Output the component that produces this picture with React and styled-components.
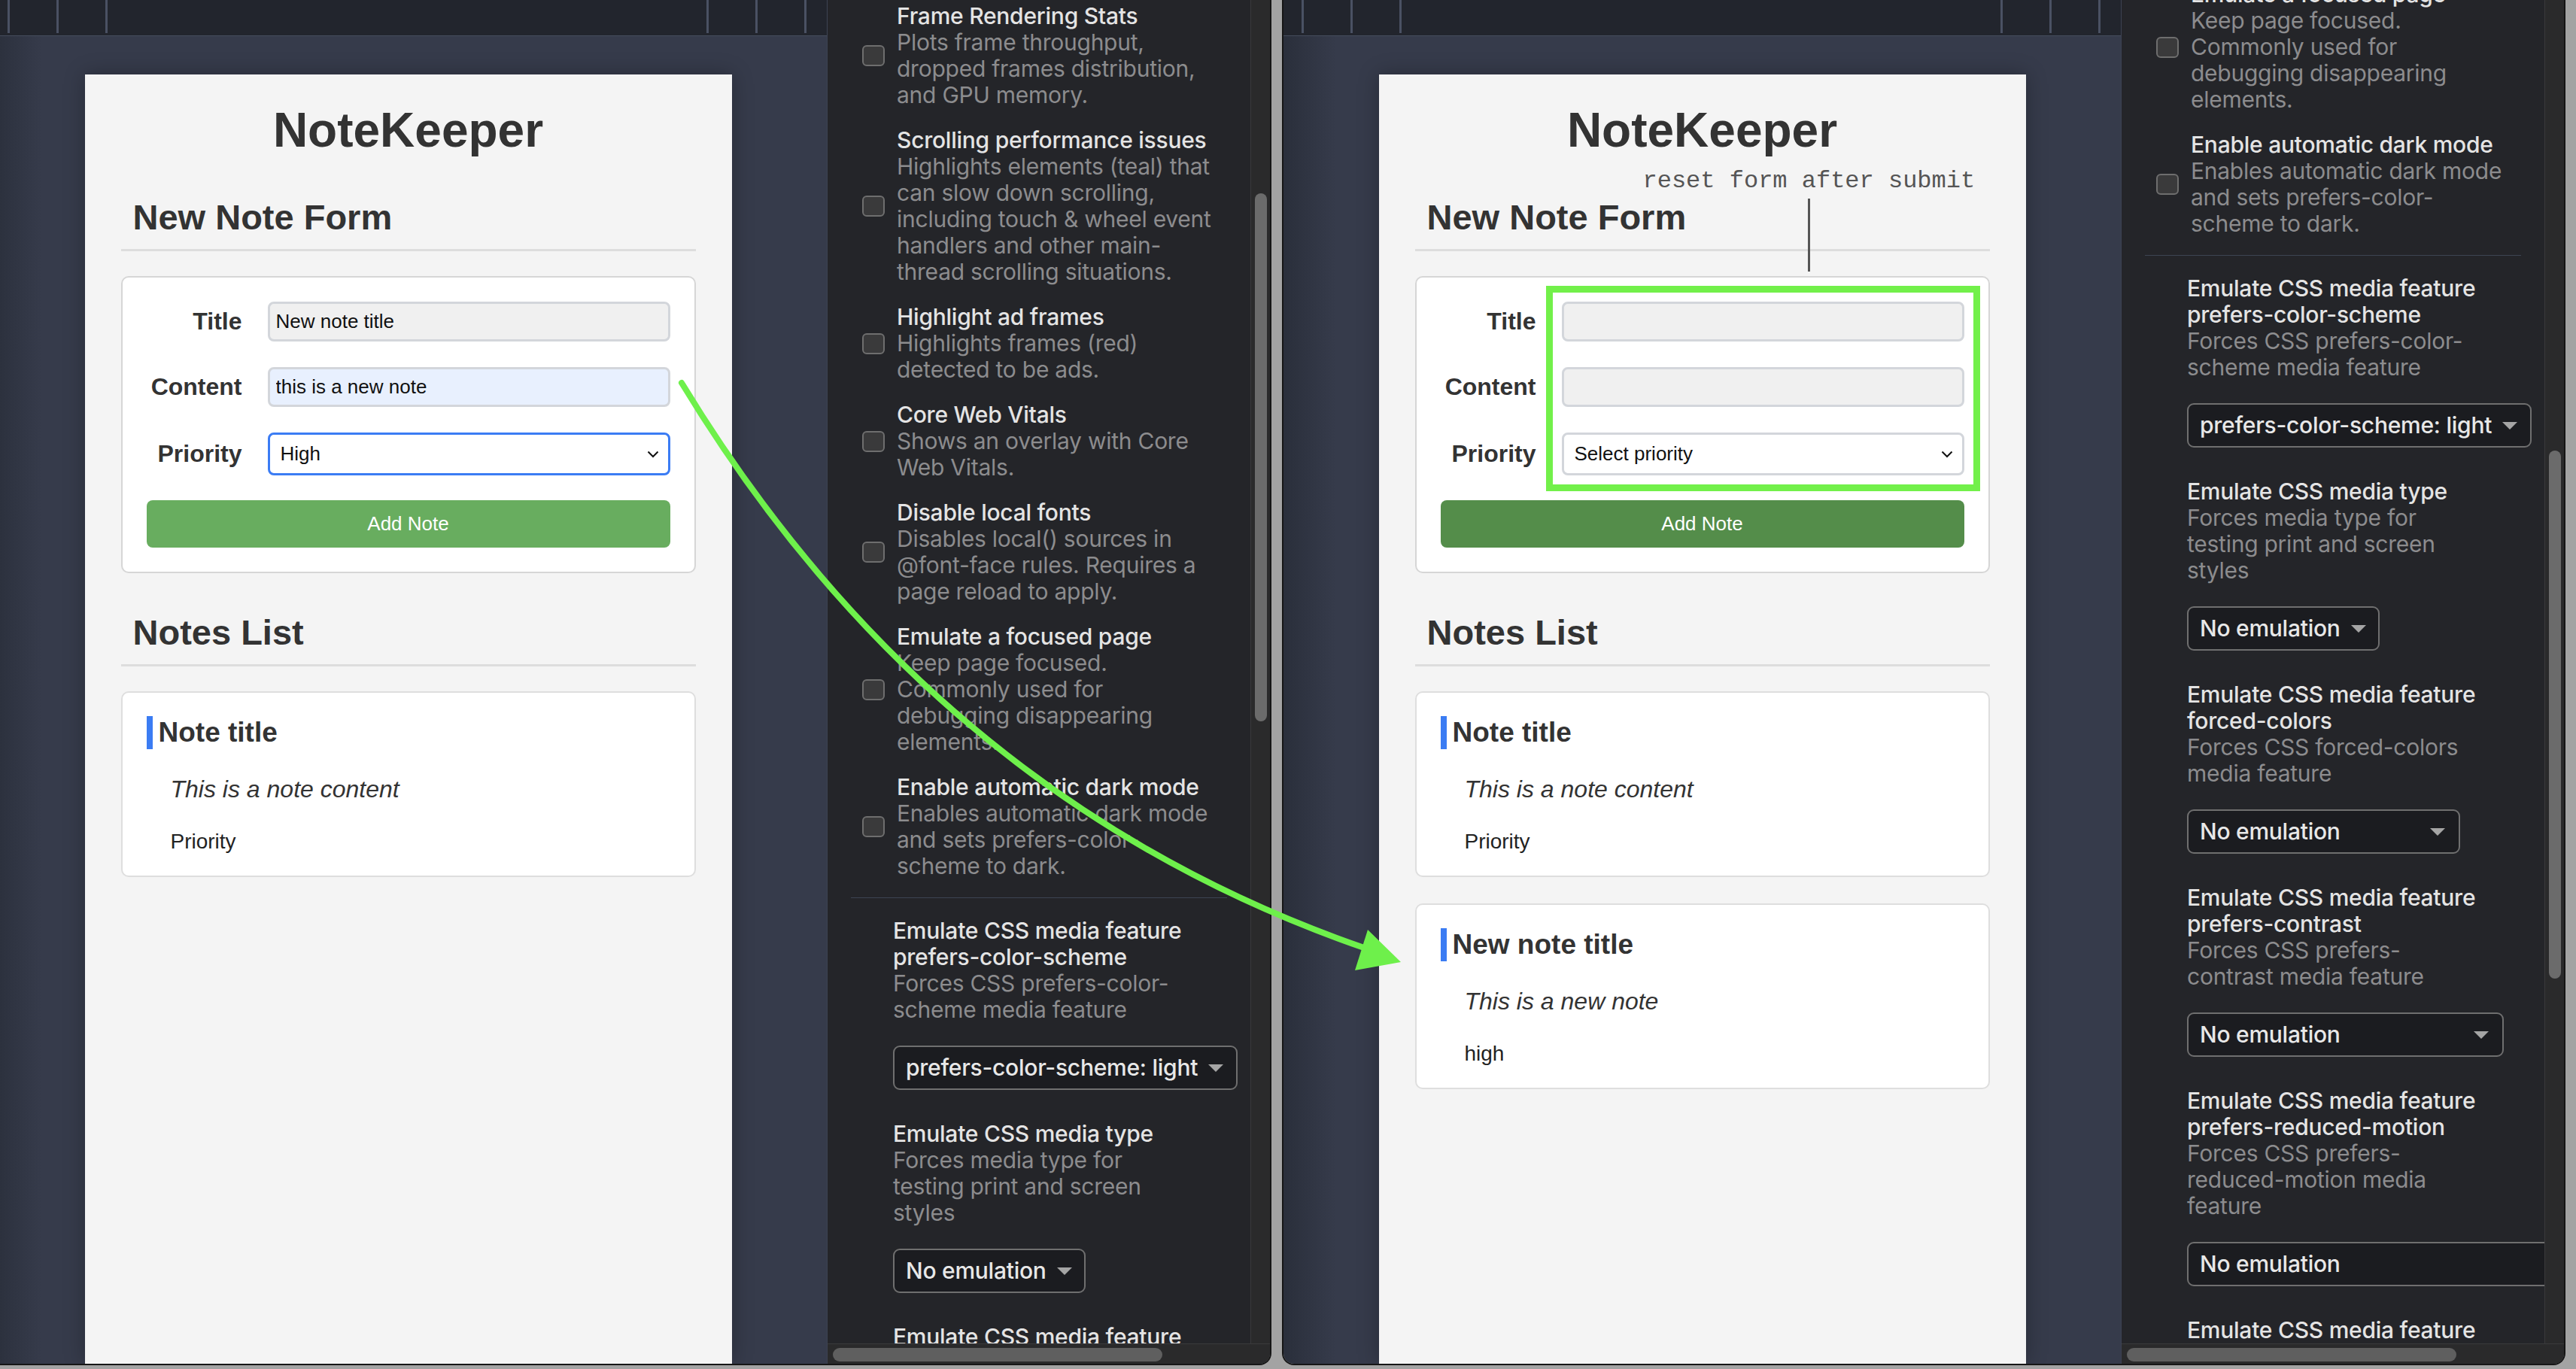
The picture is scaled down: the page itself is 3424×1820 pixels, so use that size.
import React from "react";
import styled, { createGlobalStyle } from "styled-components";

const GlobalStyle = createGlobalStyle`
  * { box-sizing: border-box; }
  html, body { margin: 0; padding: 0; background: #a3a3a3; }
  body {
    width: 3424px;
    height: 1820px;
    overflow: hidden;
    font-family: "Liberation Sans", Arial, sans-serif;
  }
`;

const checkSettings = [
  { title: ["Frame Rendering Stats"], desc: ["Plots frame throughput,", "dropped frames distribution,", "and GPU memory."] },
  {
    title: ["Scrolling performance issues"],
    desc: [
      "Highlights elements (teal) that",
      "can slow down scrolling,",
      "including touch & wheel event",
      "handlers and other main-",
      "thread scrolling situations.",
    ],
  },
  { title: ["Highlight ad frames"], desc: ["Highlights frames (red)", "detected to be ads."] },
  { title: ["Core Web Vitals"], desc: ["Shows an overlay with Core", "Web Vitals."] },
  { title: ["Disable local fonts"], desc: ["Disables local() sources in", "@font-face rules. Requires a", "page reload to apply."] },
  { title: ["Emulate a focused page"], desc: ["Keep page focused.", "Commonly used for", "debugging disappearing", "elements."] },
  { title: ["Enable automatic dark mode"], desc: ["Enables automatic dark mode", "and sets prefers-color-", "scheme to dark."] },
];

const mediaSettings = [
  {
    title: ["Emulate CSS media feature", "prefers-color-scheme"],
    desc: ["Forces CSS prefers-color-", "scheme media feature"],
    value: "prefers-color-scheme: light",
    width: 458,
  },
  {
    title: ["Emulate CSS media type"],
    desc: ["Forces media type for", "testing print and screen", "styles"],
    value: "No emulation",
    width: 256,
  },
  {
    title: ["Emulate CSS media feature", "forced-colors"],
    desc: ["Forces CSS forced-colors", "media feature"],
    value: "No emulation",
    width: 363,
  },
  {
    title: ["Emulate CSS media feature", "prefers-contrast"],
    desc: ["Forces CSS prefers-", "contrast media feature"],
    value: "No emulation",
    width: 421,
  },
  {
    title: ["Emulate CSS media feature", "prefers-reduced-motion"],
    desc: ["Forces CSS prefers-", "reduced-motion media", "feature"],
    value: "No emulation",
    width: 560,
  },
  {
    title: ["Emulate CSS media feature", "prefers-reduced-transparency"],
    desc: ["Forces CSS prefers-", "reduced-transparency media", "feature"],
    value: "No emulation",
    width: 560,
  },
];

function Chevron() {
  return (
    <svg width="16" height="10" viewBox="0 0 16 10">
      <path d="M1.5 1.5 L8 8 L14.5 1.5" fill="none" stroke="#111" strokeWidth="2" />
    </svg>
  );
}

function DropTriangle() {
  return (
    <svg width="20" height="10" viewBox="0 0 20 10">
      <path d="M0 0 H20 L10 10 Z" fill="#a5a5a5" />
    </svg>
  );
}

function Lines({ lines }) {
  return lines.map((l) => <Line key={l}>{l}</Line>);
}

function DevTools({ offset, thumbTop }) {
  return (
    <Dev.Wrapper>
      <Dev.Main>
        <Dev.Content>
          <Dev.List $offset={offset}>
            {checkSettings.map((s) => (
              <Dev.CheckItem key={s.title[0]}>
                <Dev.Checkbox />
                <Dev.Text>
                  <Dev.Title>
                    <Lines lines={s.title} />
                  </Dev.Title>
                  <Dev.Desc>
                    <Lines lines={s.desc} />
                  </Dev.Desc>
                </Dev.Text>
              </Dev.CheckItem>
            ))}
            <Dev.Divider />
            {mediaSettings.map((s) => (
              <Dev.MediaItem key={s.title.join()}>
                <Dev.Title>
                  <Lines lines={s.title} />
                </Dev.Title>
                <Dev.Desc>
                  <Lines lines={s.desc} />
                </Dev.Desc>
                <Dev.Dropdown $width={s.width}>
                  <span>{s.value}</span>
                  <DropTriangle />
                </Dev.Dropdown>
              </Dev.MediaItem>
            ))}
          </Dev.List>
        </Dev.Content>
        <Dev.ScrollColumn>
          <Dev.VThumb $top={thumbTop} />
        </Dev.ScrollColumn>
      </Dev.Main>
      <Dev.HScroll>
        <Dev.HThumb />
      </Dev.HScroll>
    </Dev.Wrapper>
  );
}

function NoteCard({ title, content, priority }) {
  return (
    <Notes.Card>
      <Notes.Title>{title}</Notes.Title>
      <Notes.Content>{content}</Notes.Content>
      <Notes.Priority>{priority}</Notes.Priority>
    </Notes.Card>
  );
}

function NotePage({ after }) {
  return (
    <Page.Panel>
      <Page.AppTitle>NoteKeeper</Page.AppTitle>
      <Page.Section>
        <Page.Heading>New Note Form</Page.Heading>
        <Form.Card>
          <Form.Fields>
            <Form.Labels>
              <Form.Label $h={53}>Title</Form.Label>
              <Form.Label $h={53}>Content</Form.Label>
              <Form.Label $h={57}>Priority</Form.Label>
            </Form.Labels>
            <Form.Inputs $highlight={after}>
              <Form.Input readOnly value={after ? "" : "New note title"} />
              <Form.Input readOnly $autofill={!after} value={after ? "" : "this is a new note"} />
              <Form.Select $focused={!after}>
                <span>{after ? "Select priority" : "High"}</span>
                <Chevron />
              </Form.Select>
            </Form.Inputs>
          </Form.Fields>
          <Form.Button $hover={after}>Add Note</Form.Button>
        </Form.Card>
      </Page.Section>
      <Page.Section>
        <Page.Heading>Notes List</Page.Heading>
        <NoteCard title="Note title" content="This is a note content" priority="Priority" />
        {after && <NoteCard title="New note title" content="This is a new note" priority="high" />}
      </Page.Section>
      {after && (
        <>
          <Annotation.Label>reset form after submit</Annotation.Label>
          <Annotation.Connector />
        </>
      )}
    </Page.Panel>
  );
}

function BrowserWindow({ shift, after, devOffset, thumbTop }) {
  return (
    <Frame.Window $shift={shift}>
      <Frame.PageArea>
        <Frame.TopBar>
          <Frame.TickGroup>
            <Frame.Tick />
            <Frame.Tick />
            <Frame.Tick />
          </Frame.TickGroup>
          <Frame.TickGroup>
            <Frame.Tick />
            <Frame.Tick />
            <Frame.Tick />
          </Frame.TickGroup>
        </Frame.TopBar>
        <Frame.Viewport>
          <NotePage after={after} />
        </Frame.Viewport>
      </Frame.PageArea>
      <DevTools offset={devOffset} thumbTop={thumbTop} />
    </Frame.Window>
  );
}

export default function App() {
  return (
    <>
      <GlobalStyle />
      <Desktop>
        <BrowserWindow shift={-16} devOffset={4} thumbTop={257} />
        <BrowserWindow shift={14} after devOffset={-850} thumbTop={599} />
        <ArrowLayer viewBox="0 0 3424 1820">
          <path
            d="M906 509 Q1243 1064 1816 1261"
            fill="none"
            stroke="#6ef04b"
            strokeWidth="8"
            strokeLinecap="round"
          />
          <polygon points="1862,1279 1818,1236 1801,1290" fill="#6ef04b" />
        </ArrowLayer>
      </Desktop>
    </>
  );
}

const Desktop = styled.div`
  position: relative;
  display: flex;
  align-items: flex-start;
  width: 3424px;
  height: 1820px;
  overflow: hidden;
  background: #a3a3a3;
`;

const ArrowLayer = styled.svg`
  position: absolute;
  left: 0;
  top: 0;
  width: 3424px;
  height: 1820px;
  pointer-events: none;
`;

const Line = styled.span`
  display: block;
  white-space: nowrap;
`;

const Frame = {
  Window: styled.div`
    display: flex;
    flex-shrink: 0;
    height: 1815px;
    margin-left: ${(p) => p.$shift}px;
    border: 2px solid #161616;
    border-top: none;
    border-radius: 0 0 16px 16px;
    overflow: hidden;
  `,
  PageArea: styled.div`
    width: 1113px;
    flex-shrink: 0;
    display: flex;
    flex-direction: column;
    background: linear-gradient(to right, #2a2f3b, #363b4b 70px);
  `,
  TopBar: styled.div`
    height: 48px;
    flex-shrink: 0;
    display: flex;
    justify-content: space-between;
    padding: 0 27px 0 24px;
    background: #22252d;
    border-bottom: 1px solid #454c5c;
  `,
  TickGroup: styled.div`
    display: flex;
    gap: 62px;
  `,
  Tick: styled.div`
    width: 3px;
    height: 44px;
    background: #4a5163;
  `,
  Viewport: styled.div`
    flex: 1;
    display: flex;
    justify-content: center;
    padding-top: 51px;
    min-height: 0;
  `,
};

const Page = {
  Panel: styled.div`
    position: relative;
    width: 860px;
    padding: 37px 48px 0;
    background: #f4f4f4;
    box-shadow: 0 0 26px rgba(0, 0, 0, 0.28);
    color: #333;
  `,
  AppTitle: styled.h1`
    margin: 0;
    text-align: center;
    font-size: 64px;
    line-height: 74px;
    font-weight: 700;
    color: #333;
  `,
  Section: styled.section`
    margin-top: 52px;
  `,
  Heading: styled.h2`
    margin: 0;
    padding: 0 16px 15px;
    font-size: 47px;
    line-height: 54px;
    font-weight: 700;
    color: #333;
    border-bottom: 3px solid #dddddd;
  `,
};

const Form = {
  Card: styled.div`
    margin-top: 33px;
    padding: 32px;
    background: #fff;
    border: 2px solid #d6d6d6;
    border-radius: 10px;
  `,
  Fields: styled.div`
    display: flex;
    gap: 34px;
  `,
  Labels: styled.div`
    width: 127px;
    flex-shrink: 0;
    display: flex;
    flex-direction: column;
    gap: 34px;
  `,
  Label: styled.label`
    height: ${(p) => p.$h}px;
    display: flex;
    align-items: center;
    justify-content: flex-end;
    font-size: 32px;
    font-weight: 700;
    color: #333;
  `,
  Inputs: styled.div`
    flex: 1;
    display: flex;
    flex-direction: column;
    gap: 34px;
    outline: ${(p) => (p.$highlight ? "9px solid #72f04a" : "none")};
    outline-offset: 12px;
  `,
  Input: styled.input`
    height: 53px;
    width: 100%;
    padding: 0 8px;
    border: 3px solid #d3d6db;
    border-radius: 8px;
    background: ${(p) => (p.$autofill ? "#e8f0fe" : "#f0f0f0")};
    font-family: "Liberation Sans", Arial, sans-serif;
    font-size: 26px;
    color: #111;
    outline: none;
  `,
  Select: styled.div`
    height: 57px;
    display: flex;
    align-items: center;
    justify-content: space-between;
    padding: 0 12px 0 14px;
    border: 3px solid ${(p) => (p.$focused ? "#3b7cf4" : "#d3d6db")};
    border-radius: 8px;
    background: #fff;
    font-size: 26px;
    color: #111;
  `,
  Button: styled.button`
    display: block;
    width: 100%;
    height: 63px;
    margin-top: 33px;
    border: none;
    border-radius: 8px;
    background: ${(p) => (p.$hover ? "#548d4a" : "#68ad5f")};
    color: #fff;
    font-family: "Liberation Sans", Arial, sans-serif;
    font-size: 26px;
  `,
};

const Notes = {
  Card: styled.article`
    margin-top: 33px;
    padding: 31px 32px 27px;
    background: #fff;
    border: 2px solid #dedede;
    border-radius: 10px;

    & + & {
      margin-top: 35px;
    }
  `,
  Title: styled.h3`
    margin: 0;
    padding-left: 8px;
    border-left: 8px solid #3b7cf3;
    font-size: 37px;
    line-height: 44px;
    font-weight: 700;
    color: #333;
  `,
  Content: styled.p`
    margin: 33px 0 0;
    padding-left: 32px;
    font-size: 32px;
    line-height: 40px;
    font-style: italic;
    color: #333;
  `,
  Priority: styled.p`
    margin: 32px 0 0;
    padding-left: 32px;
    font-size: 28px;
    line-height: 36px;
    color: #222;
  `,
};

const Annotation = {
  Label: styled.div`
    position: absolute;
    left: 351px;
    top: 124px;
    font-family: "Liberation Mono", "Courier New", monospace;
    font-size: 32px;
    line-height: 36px;
    color: #555;
    white-space: nowrap;
  `,
  Connector: styled.div`
    position: absolute;
    left: 570px;
    top: 165px;
    width: 3px;
    height: 97px;
    background: #555;
  `,
};

const Dev = {
  Wrapper: styled.div`
    width: 589px;
    flex-shrink: 0;
    display: flex;
    flex-direction: column;
    background: #242529;
    border-left: 1px solid #3c4252;
    font-family: Inter, "Noto Sans", sans-serif;
    font-size: 30px;
    line-height: 35px;
    letter-spacing: -0.25px;
  `,
  Main: styled.div`
    flex: 1;
    min-height: 0;
    display: flex;
  `,
  Content: styled.div`
    flex: 1;
    min-width: 0;
    overflow: hidden;
  `,
  List: styled.div`
    margin-top: ${(p) => p.$offset}px;
    display: flex;
    flex-direction: column;
  `,
  CheckItem: styled.div`
    display: flex;
    align-items: center;
    gap: 16px;
    padding-left: 46px;

    & + & {
      margin-top: 25px;
    }
  `,
  Checkbox: styled.div`
    width: 30px;
    height: 28px;
    flex-shrink: 0;
    border: 2px solid #6e6e6e;
    border-radius: 6px;
    background: #3a3a3b;
  `,
  Text: styled.div`
    display: flex;
    flex-direction: column;
  `,
  Title: styled.div`
    color: #e4e4e4;
    font-weight: 500;
  `,
  Desc: styled.div`
    color: #8c8c8e;
  `,
  Divider: styled.div`
    height: 1px;
    margin: 24px 31px 26px;
    background: #3d4452;
  `,
  MediaItem: styled.div`
    padding-left: 87px;

    & + & {
      margin-top: 41px;
    }
  `,
  Dropdown: styled.div`
    width: ${(p) => p.$width}px;
    height: 59px;
    margin-top: 30px;
    display: flex;
    align-items: center;
    justify-content: space-between;
    gap: 14px;
    padding: 0 18px 0 15px;
    border: 2px solid #6f6f6f;
    border-radius: 9px;
    background: #1b1c20;
    color: #e8e8e8;
    font-weight: 500;
    white-space: nowrap;

    svg {
      flex-shrink: 0;
    }
  `,
  ScrollColumn: styled.div`
    width: 26px;
    flex-shrink: 0;
    display: flex;
    justify-content: center;
    background: #2a2a2b;
    border-left: 1px solid #3a3a3c;
  `,
  VThumb: styled.div`
    width: 16px;
    height: 702px;
    margin-top: ${(p) => p.$top}px;
    border-radius: 8px;
    background: #6b6b6b;
  `,
  HScroll: styled.div`
    height: 27px;
    flex-shrink: 0;
    padding: 5px 7px 0;
    background: #2a2a2b;
    border-top: 1px solid #3a3a3c;
  `,
  HThumb: styled.div`
    width: 438px;
    height: 18px;
    border-radius: 9px;
    background: #5f5f5f;
  `,
};
